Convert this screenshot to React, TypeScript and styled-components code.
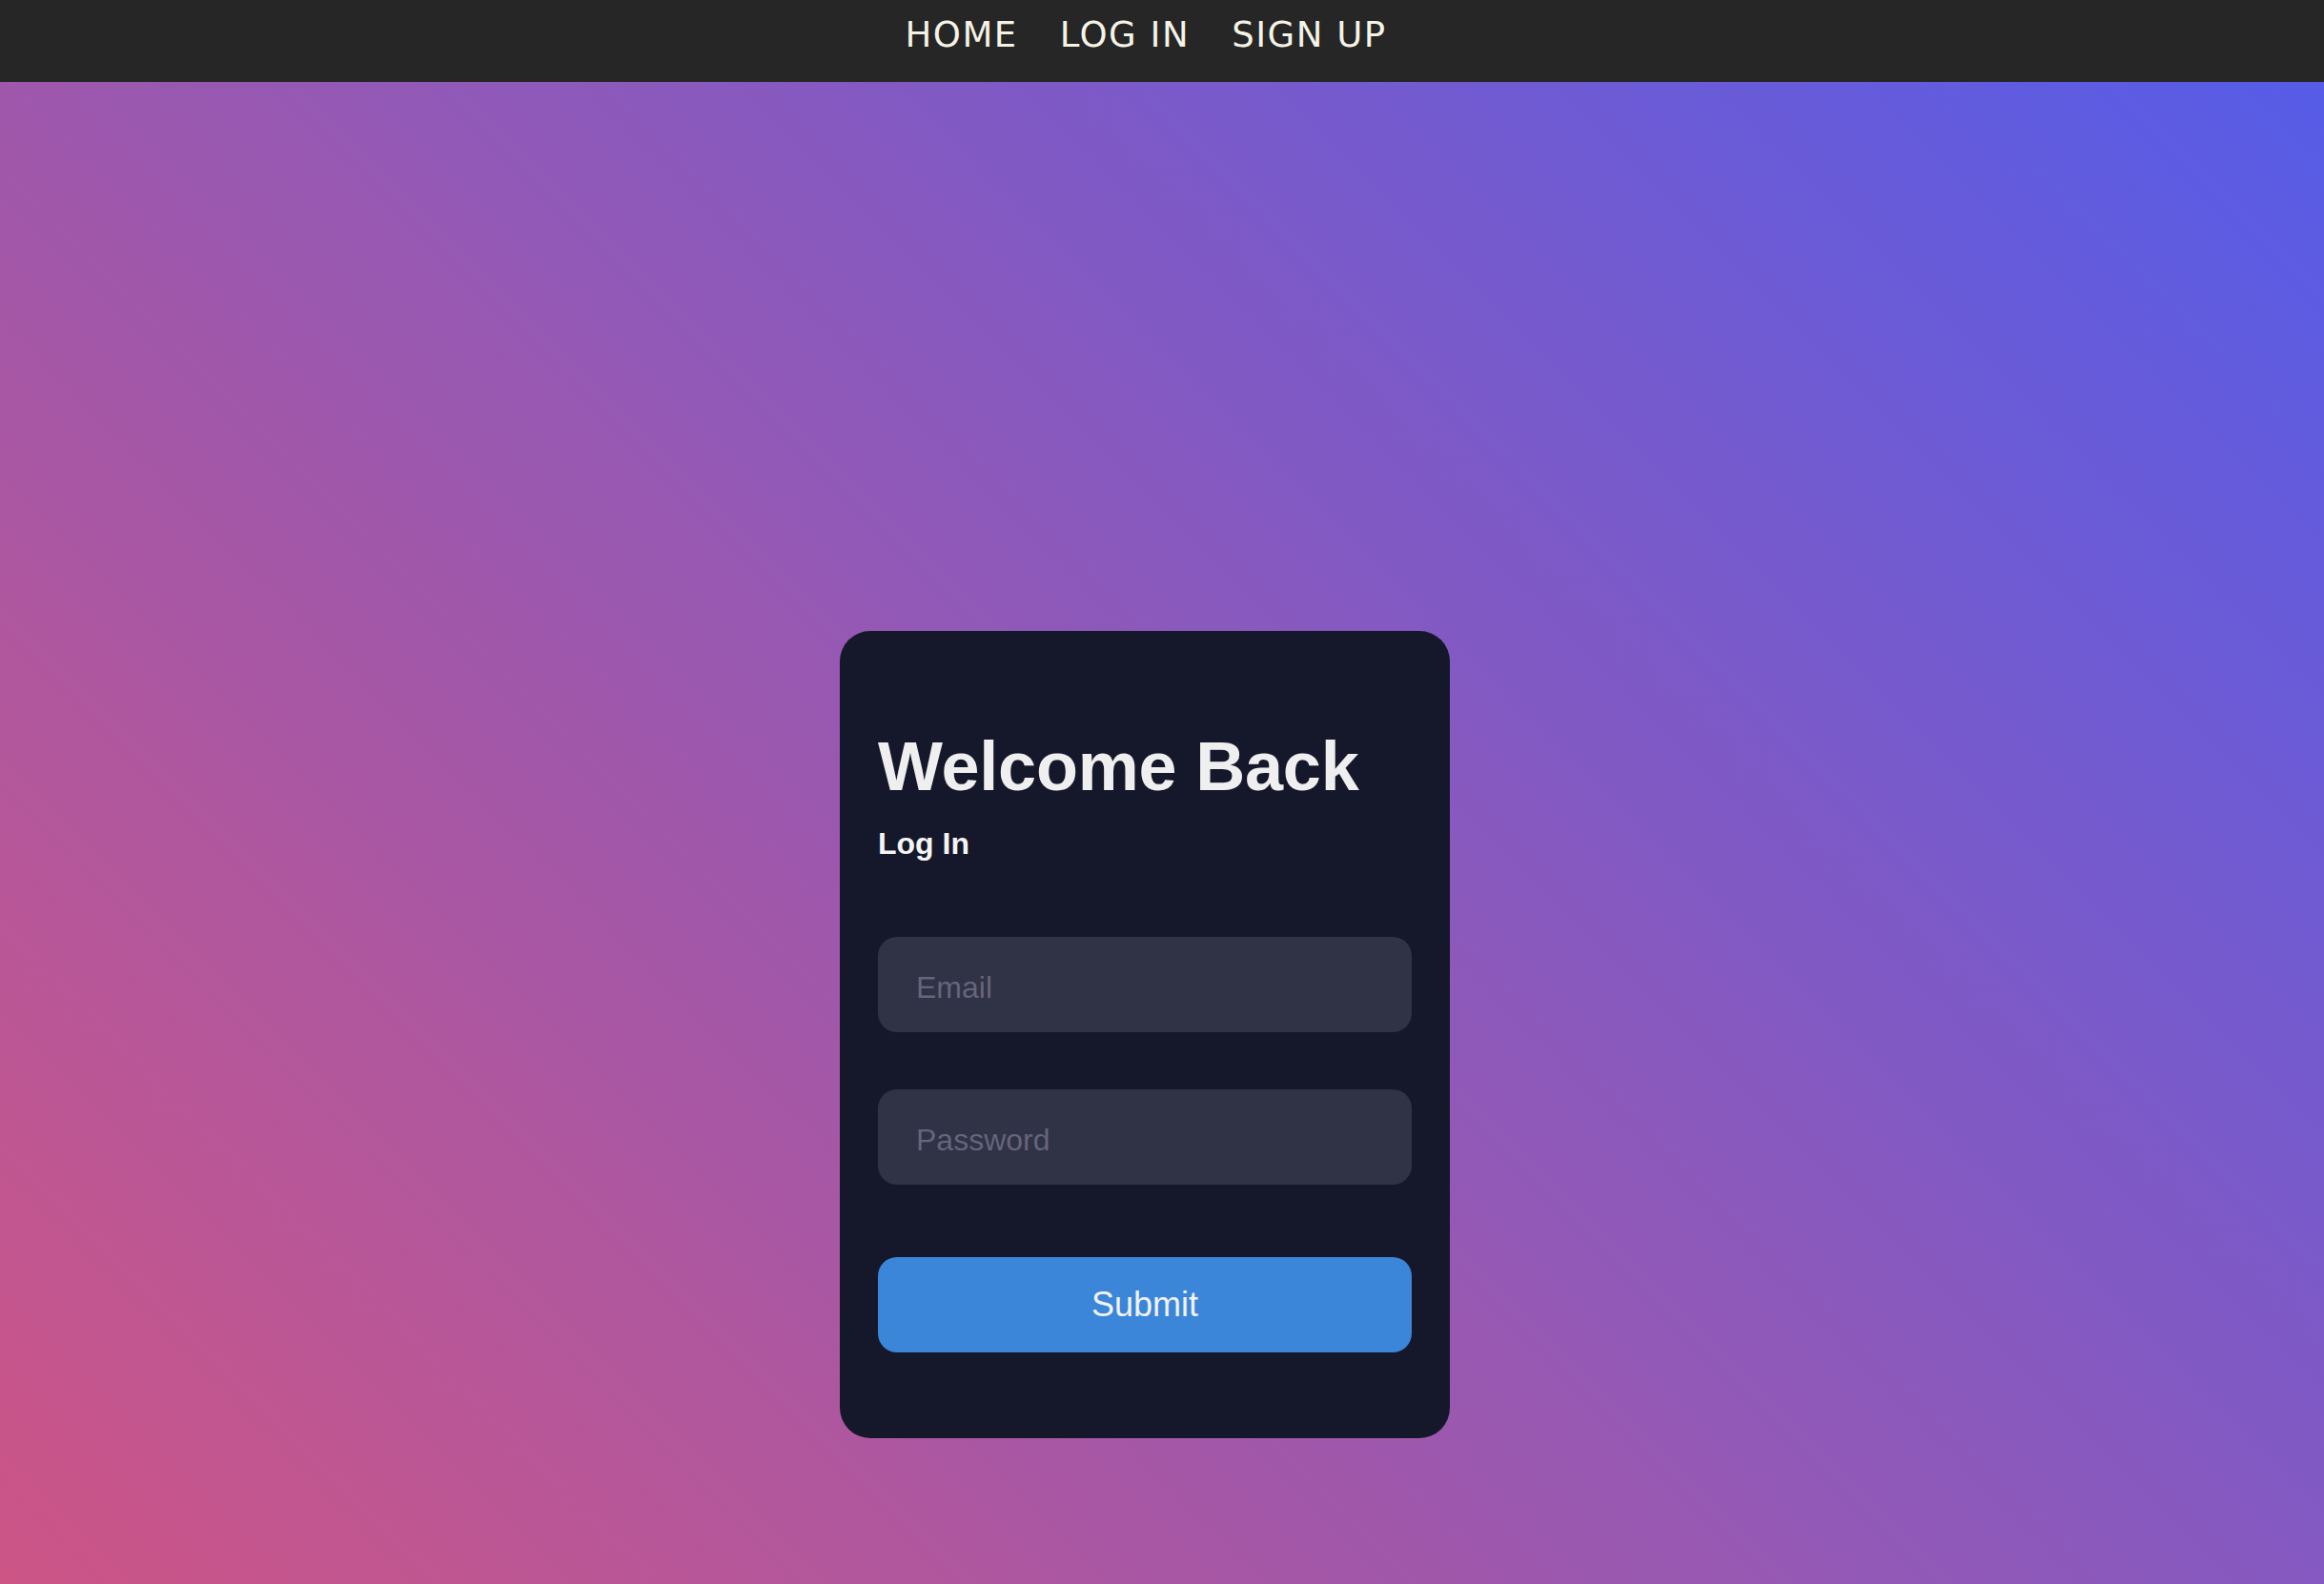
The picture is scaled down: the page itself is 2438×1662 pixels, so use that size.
import React from "react";
import styled, { createGlobalStyle } from "styled-components";

const GlobalStyle = createGlobalStyle`
  * { box-sizing: border-box; }
  html, body { margin: 0; padding: 0; }
  body {
    font-family: "Liberation Sans", Arial, sans-serif;
    background: #262626;
  }
`;

const Page = styled.div`
  display: flex;
  flex-direction: column;
  min-height: 1662px;
`;

const NavBar = styled.nav`
  height: 86px;
  background: #262626;
  display: flex;
  justify-content: center;
  align-items: flex-start;
  padding-top: 15px;
  padding-right: 34px;
  gap: 44px;
`;

const NavLink = styled.a`
  font-family: "DejaVu Sans", sans-serif;
  font-size: 37px;
  letter-spacing: 1.5px;
  color: #f5f3e6;
  text-decoration: none;
  text-transform: uppercase;
  line-height: 1.2;
  font-weight: 400;
`;

const Main = styled.main`
  flex: 1;
  display: flex;
  justify-content: center;
  align-items: flex-start;
  padding-top: 576px;
  padding-right: 36px;
  background: linear-gradient(45deg, #cd5586 0%, #565ce7 100%);
`;

const Card = styled.form`
  width: 640px;
  background: #15182a;
  border-radius: 32px;
  padding: 102px 40px 90px;
  display: flex;
  flex-direction: column;
`;

const Title = styled.h1`
  margin: 0;
  font-size: 72px;
  font-weight: 700;
  color: #efefef;
  line-height: 80px;
  letter-spacing: -0.2px;
`;

const Subtitle = styled.h2`
  margin: 23px 0 0;
  font-size: 32px;
  font-weight: 700;
  color: #f4f4f4;
  line-height: 36px;
`;

const Field = styled.input<{ $mt: number }>`
  margin-top: ${(p) => p.$mt}px;
  height: 100px;
  width: 100%;
  border: none;
  outline: none;
  border-radius: 20px;
  background: #303245;
  padding: 6px 40px 0;
  font-family: "Liberation Sans", Arial, sans-serif;
  font-size: 32px;
  color: #eee;
  &::placeholder {
    color: #65657b;
  }
`;

const SubmitButton = styled.button`
  margin-top: 76px;
  height: 100px;
  width: 100%;
  border: none;
  border-radius: 20px;
  background: #3b86d8;
  color: #f2f2f2;
  font-family: "Liberation Sans", Arial, sans-serif;
  font-size: 36px;
  cursor: pointer;
`;

export default function App() {
  return (
    <>
      <GlobalStyle />
      <Page>
        <NavBar>
          <NavLink href="#">Home</NavLink>
          <NavLink href="#">Log In</NavLink>
          <NavLink href="#">Sign Up</NavLink>
        </NavBar>
        <Main>
          <Card onSubmit={(e) => e.preventDefault()}>
            <Title>Welcome Back</Title>
            <Subtitle>Log In</Subtitle>
            <Field $mt={80} type="email" placeholder="Email" />
            <Field $mt={60} type="password" placeholder="Password" />
            <SubmitButton type="submit">Submit</SubmitButton>
          </Card>
        </Main>
      </Page>
    </>
  );
}
